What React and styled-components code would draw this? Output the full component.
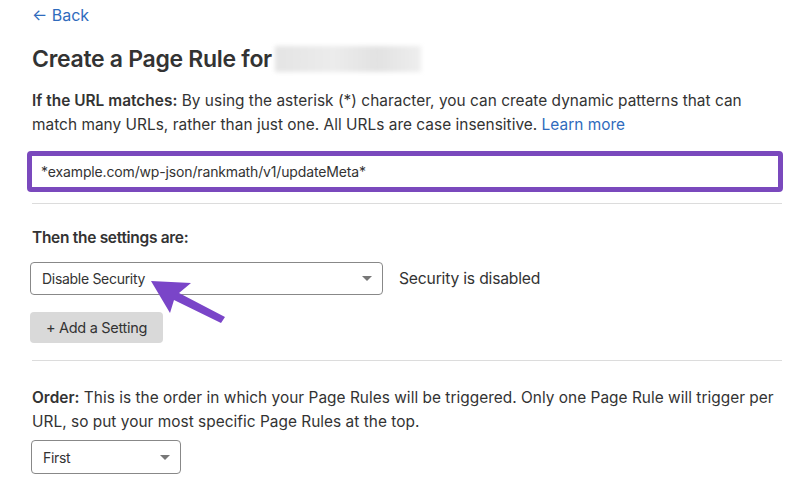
import React from "react";
import styled, { createGlobalStyle } from "styled-components";

const Global = createGlobalStyle`
  html, body { margin: 0; padding: 0; background: #fff; }
  body { font-family: Inter, "Noto Sans", sans-serif; color: #333; }
  * { box-sizing: border-box; }
`;

const Page = styled.div`
  width: 810px;
  height: 488px;
  overflow: hidden;
  padding: 5px 28px 0 32px;
  position: relative;
`;

const BackLink = styled.a`
  display: inline-flex;
  align-items: center;
  gap: 4px;
  color: #2f6bbd;
  font-size: 16px;
  line-height: 20px;
  text-decoration: none;
`;

const TitleRow = styled.div`
  display: flex;
  align-items: center;
  gap: 3px;
  margin-top: 19px;
`;

const Title = styled.h1`
  margin: 0;
  font-size: 23px;
  line-height: 30px;
  font-weight: 600;
  color: #333;
  letter-spacing: -0.3px;
`;

const Blur = styled.div`
  width: 146px;
  height: 26px;
  background: linear-gradient(90deg, #e4e4e4, #ececec 40%, #e2e2e2 70%, #eeeeee);
  filter: blur(2px);
`;

const Para = styled.p`
  margin: ${(p) => p.$mt || 0}px 0 0;
  width: 752px;
  font-size: 15.4px;
  line-height: 24px;
  color: #333;
  letter-spacing: 0.03px;
  b { font-weight: 600; }
`;

const Link = styled.a`
  color: #2f6bbd;
  text-decoration: none;
`;

const Highlight = styled.div`
  margin: 14px 0 0 -5px;
  width: 756px;
  border: 5px solid #7a49bd;
  border-radius: 4px;
  padding: 0;
`;

const UrlInput = styled.div`
  height: 31px;
  background: #fff;
  display: flex;
  align-items: center;
  padding-left: 9px;
  font-size: 14px;
  color: #333;
  letter-spacing: -0.15px;
`;

const Divider = styled.hr`
  border: none;
  border-top: 1px solid #dcdcdc;
  margin: ${(p) => p.$mt}px 0 0;
  width: 750px;
`;

const SubHead = styled.h2`
  margin: 22px 0 0;
  font-size: 15.5px;
  line-height: 24px;
  font-weight: 600;
  letter-spacing: -0.3px;
  color: #333;
`;

const SettingRow = styled.div`
  display: flex;
  align-items: center;
  gap: 16px;
  margin: 12px 0 0 -2px;
`;

const Select = styled.div`
  width: ${(p) => p.$w}px;
  height: ${(p) => p.$h}px;
  border: 1px solid #888;
  border-radius: 4px;
  display: flex;
  align-items: center;
  justify-content: space-between;
  padding: 0 10px 0 11px;
  font-size: 14px;
  color: #333;
  letter-spacing: -0.3px;
  background: #fff;
`;

const Caret = styled.span`
  width: 0;
  height: 0;
  border-left: 5px solid transparent;
  border-right: 5px solid transparent;
  border-top: 5px solid #777;
`;

const Status = styled.span`
  font-size: 15.7px;
  color: #333;
  letter-spacing: -0.2px;
`;

const AddButton = styled.button`
  display: block;
  margin: 17px 0 0 -2px;
  width: 133px;
  height: 31px;
  border: none;
  border-radius: 4px;
  background: #d9d9d9;
  font-family: inherit;
  font-size: 14.5px;
  color: #333;
  letter-spacing: -0.3px;
  padding: 0;
`;

const OrderSelectWrap = styled.div`
  margin: 6px 0 0 -1px;
`;

const Pointer = styled.svg`
  position: absolute;
  left: 139px;
  top: 273px;
`;

export default function App() {
  return (
    <>
      <Global />
      <Page>
        <BackLink href="#">← Back</BackLink>
        <TitleRow>
          <Title>Create a Page Rule for</Title>
          <Blur />
        </TitleRow>
        <Para $mt={15}>
          <b>If the URL matches:</b> By using the asterisk (*) character, you can create dynamic patterns that can
          match many URLs, rather than just one. All URLs are case insensitive. <Link href="#">Learn more</Link>
        </Para>
        <Highlight>
          <UrlInput>*example.com/wp-json/rankmath/v1/updateMeta*</UrlInput>
        </Highlight>
        <Divider $mt={11} />
        <SubHead>Then the settings are:</SubHead>
        <SettingRow>
          <Select $w={353} $h={33}>
            Disable Security
            <Caret />
          </Select>
          <Status>Security is disabled</Status>
        </SettingRow>
        <AddButton>+ Add a Setting</AddButton>
        <Divider $mt={17} />
        <Para $mt={25}>
          <b>Order:</b> This is the order in which your Page Rules will be triggered. Only one Page Rule will trigger per
          URL, so put your most specific Page Rules at the top.
        </Para>
        <OrderSelectWrap>
          <Select $w={150} $h={34}>
            First
            <Caret />
          </Select>
        </OrderSelectWrap>
        <Pointer width="100" height="56" viewBox="0 0 100 56">
          <polygon points="12,8 52,10 40,20 86,44 82,50 35,27 31,40" fill="#7a45c8" />
        </Pointer>
      </Page>
    </>
  );
}
